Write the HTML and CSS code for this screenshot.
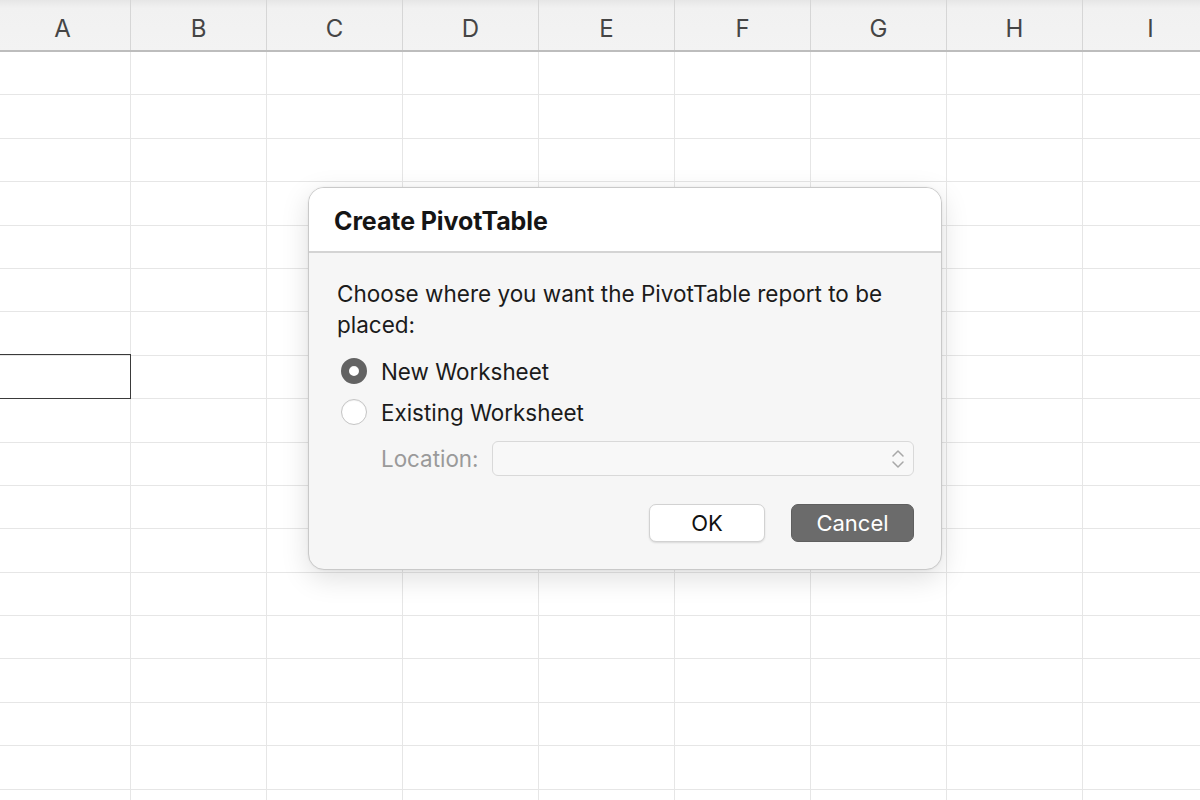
FILE: index.html
```html
<!DOCTYPE html>
<html>
<head>
<meta charset="utf-8">
<link rel="stylesheet" href="styles.css">
</head>
<body>
<div class="sheet">
  <div class="head">
    <div class="hc">A</div><div class="hc">B</div><div class="hc">C</div><div class="hc">D</div><div class="hc">E</div><div class="hc">F</div><div class="hc">G</div><div class="hc">H</div><div class="hc">I</div>
  </div>
  <div class="grid">
    <div class="row"><i></i><i></i><i></i><i></i><i></i><i></i><i></i><i></i><i></i></div>
    <div class="row"><i></i><i></i><i></i><i></i><i></i><i></i><i></i><i></i><i></i></div>
    <div class="row"><i></i><i></i><i></i><i></i><i></i><i></i><i></i><i></i><i></i></div>
    <div class="row"><i></i><i></i><i></i><i></i><i></i><i></i><i></i><i></i><i></i></div>
    <div class="row"><i></i><i></i><i></i><i></i><i></i><i></i><i></i><i></i><i></i></div>
    <div class="row"><i></i><i></i><i></i><i></i><i></i><i></i><i></i><i></i><i></i></div>
    <div class="row"><i></i><i></i><i></i><i></i><i></i><i></i><i></i><i></i><i></i></div>
    <div class="row"><i class="sel"></i><i></i><i></i><i></i><i></i><i></i><i></i><i></i><i></i></div>
    <div class="row"><i></i><i></i><i></i><i></i><i></i><i></i><i></i><i></i><i></i></div>
    <div class="row"><i></i><i></i><i></i><i></i><i></i><i></i><i></i><i></i><i></i></div>
    <div class="row"><i></i><i></i><i></i><i></i><i></i><i></i><i></i><i></i><i></i></div>
    <div class="row"><i></i><i></i><i></i><i></i><i></i><i></i><i></i><i></i><i></i></div>
    <div class="row"><i></i><i></i><i></i><i></i><i></i><i></i><i></i><i></i><i></i></div>
    <div class="row"><i></i><i></i><i></i><i></i><i></i><i></i><i></i><i></i><i></i></div>
    <div class="row"><i></i><i></i><i></i><i></i><i></i><i></i><i></i><i></i><i></i></div>
    <div class="row"><i></i><i></i><i></i><i></i><i></i><i></i><i></i><i></i><i></i></div>
    <div class="row"><i></i><i></i><i></i><i></i><i></i><i></i><i></i><i></i><i></i></div>
    <div class="row"><i></i><i></i><i></i><i></i><i></i><i></i><i></i><i></i><i></i></div>
  </div>
</div>

<div class="dialog">
  <div class="title">Create PivotTable</div>
  <div class="body">
    <p class="prompt">Choose where you want the PivotTable report to be placed:</p>
    <div class="opt"><span class="radio on"></span><span>New Worksheet</span></div>
    <div class="opt"><span class="radio"></span><span>Existing Worksheet</span></div>
    <div class="loc">
      <span class="loc-label">Location:</span>
      <div class="select">
        <svg width="14" height="22" viewBox="0 0 14 22"><path d="M2 8 L7 3 L12 8 M2 14 L7 19 L12 14" fill="none" stroke="#a8a8a8" stroke-width="1.5" stroke-linecap="round" stroke-linejoin="round"/></svg>
      </div>
    </div>
    <div class="buttons">
      <button class="btn ok">OK</button>
      <button class="btn cancel">Cancel</button>
    </div>
  </div>
</div>
</body>
</html>
```

FILE: styles.css
```css
* { box-sizing: border-box; }
html, body {
  margin: 0;
  padding: 0;
  width: 1200px;
  height: 800px;
  overflow: hidden;
  background: #fff;
  font-family: Inter, "Liberation Sans", sans-serif;
}
.sheet {
  margin-left: -5px;
  width: 1240px;
}
.head {
  display: grid;
  grid-template-columns: repeat(9, 136px);
  height: 52px;
  background: linear-gradient(#e6e6e6 0px, #f1f1f1 8px, #f3f3f3 100%);
  border-bottom: 2px solid #bdbdbd;
}
.hc {
  display: flex;
  align-items: center;
  justify-content: center;
  font-size: 24px;
  color: #454545;
  border-right: 1px solid #d6d6d6;
  padding-top: 6px;
}
.grid {
  display: flex;
  flex-direction: column;
}
.row {
  display: grid;
  grid-template-columns: repeat(9, 136px);
  height: 43.4px;
}
.row i {
  display: block;
  border-right: 1.5px solid #e6e6e6;
  border-bottom: 1.5px solid #e6e6e6;
}
.row i.sel {
  border: 1.5px solid #3a3a3a;
  margin-top: -1.5px;
}
.dialog {
  position: absolute;
  left: 308px;
  top: 187px;
  width: 634px;
  height: 383px;
  border: 1px solid #c9c9c9;
  border-radius: 16px;
  background: #f6f6f6;
  overflow: hidden;
  box-shadow: 0 8px 28px rgba(0,0,0,0.13), 0 0 2px rgba(0,0,0,0.08);
}
.title {
  height: 65px;
  background: #fff;
  border-bottom: 2px solid #d4d4d4;
  padding: 18px 0 0 25px;
  font-size: 25px;
  font-weight: 700;
  color: #151515;
  letter-spacing: -0.1px;
}
.body {
  padding: 25px 27px 0 28px;
  color: #1b1b1b;
}
.prompt {
  margin: 0;
  font-size: 22.5px;
  line-height: 31px;
  width: 580px;
}
.opt {
  display: flex;
  align-items: center;
  height: 34px;
  font-size: 22.4px;
  gap: 14px;
  padding-left: 4px;
}
.opt:first-of-type { margin-top: 14px; }
.opt + .opt { margin-top: 7px; }
.radio {
  width: 26px;
  height: 26px;
  border-radius: 50%;
  background: #fff;
  border: 1px solid #c4c4c4;
  box-shadow: inset 0 1px 1px rgba(0,0,0,0.05);
  flex: none;
}
.radio.on {
  background: #fff;
  border: 8px solid #636363;
}
.loc {
  display: flex;
  align-items: center;
  margin-top: 12px;
  padding-left: 44px;
  gap: 13px;
}
.loc-label {
  font-size: 22.4px;
  color: #9a9a9a;
}
.select {
  flex: 1;
  height: 35px;
  border: 1px solid #d9d9d9;
  border-radius: 6px;
  background: #f8f8f8;
  display: flex;
  align-items: center;
  justify-content: flex-end;
  padding-right: 8px;
}
.buttons {
  display: flex;
  justify-content: flex-end;
  gap: 26px;
  margin-top: 28px;
}
.btn {
  font-family: Inter, "Liberation Sans", sans-serif;
  font-size: 22px;
  height: 38px;
  border-radius: 7px;
  padding: 0;
}
.ok {
  width: 116px;
  background: #fff;
  color: #111;
  border: 1px solid #d2d2d2;
  box-shadow: 0 1px 2px rgba(0,0,0,0.12);
}
.cancel {
  width: 123px;
  background: #6b6b6b;
  color: #fff;
  border: 1px solid #5f5f5f;
}
```
